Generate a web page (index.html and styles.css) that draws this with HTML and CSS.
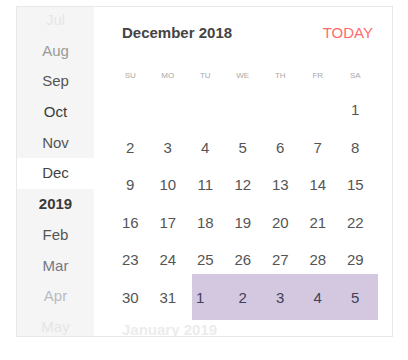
FILE: index.html
```html
<!DOCTYPE html>
<html>
<head>
<meta charset="utf-8">
<link rel="stylesheet" href="styles.css">
</head>
<body>
<div class="picker">
  <div class="months">
    <div class="month-list">
      <div class="m fade4">Jul</div>
      <div class="m fade3">Aug</div>
      <div class="m fade1">Sep</div>
      <div class="m">Oct</div>
      <div class="m fade1">Nov</div>
      <div class="m active">Dec</div>
      <div class="m year">2019</div>
      <div class="m fade1">Feb</div>
      <div class="m fade2">Mar</div>
      <div class="m fade3b">Apr</div>
      <div class="m fade4">May</div>
    </div>
  </div>
  <div class="cal">
    <div class="cal-head">
      <span class="title">December 2018</span>
      <span class="today">TODAY</span>
    </div>
    <div class="weekdays">
      <div>SU</div><div>MO</div><div>TU</div><div>WE</div><div>TH</div><div>FR</div><div>SA</div>
    </div>
    <div class="days">
      <div></div><div></div><div></div><div></div><div></div><div></div><div class="d">1</div>
      <div class="d">2</div><div class="d">3</div><div class="d">4</div><div class="d">5</div><div class="d">6</div><div class="d">7</div><div class="d">8</div>
      <div class="d">9</div><div class="d">10</div><div class="d">11</div><div class="d">12</div><div class="d">13</div><div class="d">14</div><div class="d">15</div>
      <div class="d">16</div><div class="d">17</div><div class="d">18</div><div class="d">19</div><div class="d">20</div><div class="d">21</div><div class="d">22</div>
      <div class="d">23</div><div class="d">24</div><div class="d">25</div><div class="d">26</div><div class="d">27</div><div class="d">28</div><div class="d">29</div>
      <div class="d">30</div><div class="d">31</div>
      <div class="d sel sel-start">1</div><div class="d sel">2</div><div class="d sel">3</div><div class="d sel">4</div><div class="d sel sel-end">5</div>
    </div>
    <div class="next">January 2019</div>
  </div>
</div>
</body>
</html>
```
FILE: styles.css
```css
html, body {
  margin: 0;
  padding: 0;
  background: #ffffff;
}
body {
  font-family: "Liberation Sans", Arial, sans-serif;
}
.picker {
  margin: 6px 0 0 16px;
  width: 377px;
  height: 331px;
  box-sizing: border-box;
  border: 1px solid #e8e8e8;
  display: flex;
  overflow: hidden;
}
.months {
  width: 77px;
  flex: none;
  background: #f5f5f5;
  overflow: hidden;
}
.month-list {
  margin-top: -2px;
}
.m {
  height: 30.7px;
  line-height: 30.7px;
  text-align: center;
  font-size: 15px;
  color: #3a3a3a;
}
.m.fade1 { color: #555555; }
.m.fade2 { color: #747884; }
.m.fade3 { color: #9a9a9a; }
.m.fade3b { color: #b8bbc2; }
.m.fade4 { color: #e6e6e6; }
.m.active {
  background: #ffffff;
  color: #444444;
}
.m.year {
  font-weight: bold;
  color: #3a3a3a;
}
.cal {
  flex: 1;
  padding: 0 18px 0 17.5px;
  overflow: hidden;
}
.cal-head {
  height: 50px;
  display: flex;
  align-items: center;
  justify-content: space-between;
  padding: 0 1px 0 10.5px;
}
.title {
  font-size: 15px;
  font-weight: bold;
  color: #444444;
}
.today {
  font-size: 15px;
  color: #ff6b6b;
}
.weekdays {
  display: grid;
  grid-template-columns: repeat(7, 37.5px);
  height: 34px;
  padding-top: 4px;
  box-sizing: border-box;
}
.weekdays div {
  text-align: center;
  line-height: 30px;
  font-size: 8px;
  color: #a8a8a8;
}
.days {
  display: grid;
  grid-template-columns: repeat(7, 37.5px);
  grid-template-rows: repeat(6, 37.5px);
}
.d {
  display: flex;
  align-items: center;
  justify-content: center;
  font-size: 15px;
  color: #555555;
}
.sel {
  background: #d3c8e0;
  margin: -4.25px 0;
  color: #40405a;
}
.sel-start {
  margin-left: 5.5px;
  justify-content: flex-start;
  padding-left: 4px;
}
.sel-end {
  margin-right: -4px;
  padding-right: 4px;
}
.next {
  padding-left: 10.5px;
  height: 28px;
  line-height: 28px;
  font-size: 15px;
  font-weight: bold;
  color: #ececec;
}
```
